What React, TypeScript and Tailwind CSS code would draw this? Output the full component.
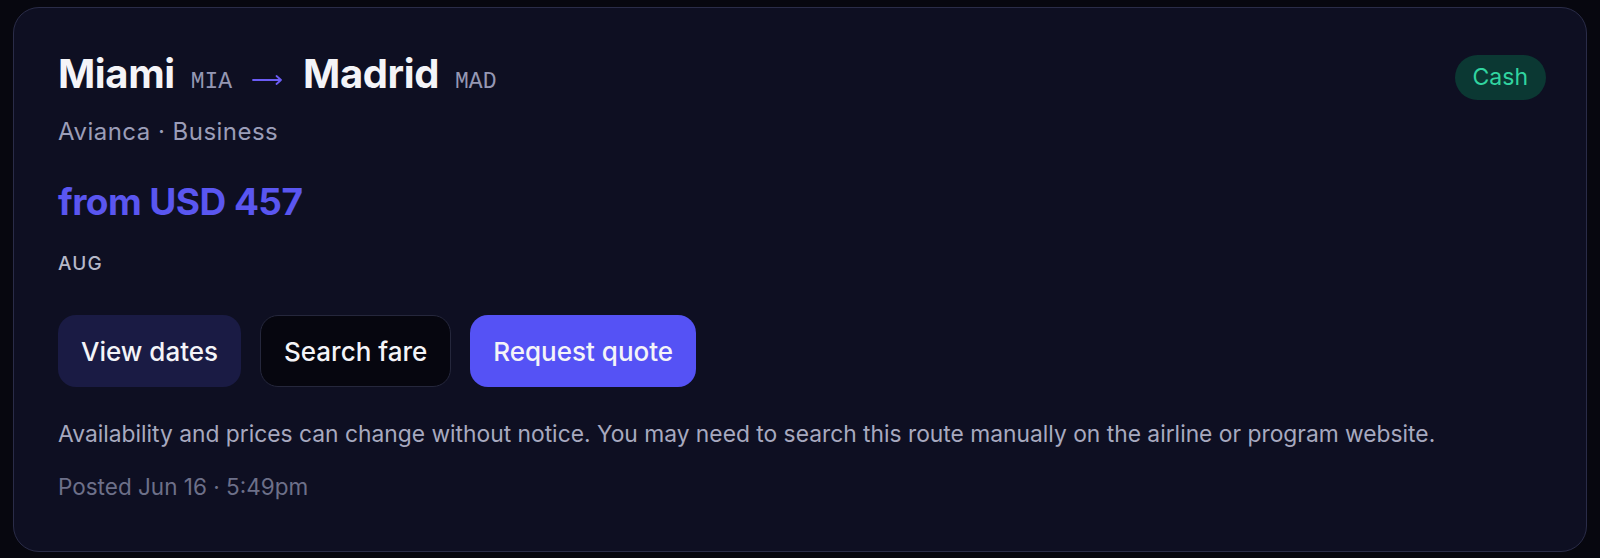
import React from "react";

const codeFont = { fontFamily: '"Liberation Mono", "DejaVu Sans Mono", monospace' };

function Code({ children }: { children: React.ReactNode }) {
  return (
    <span className="text-[23px] font-normal leading-none text-[#9597b3]" style={codeFont}>
      {children}
    </span>
  );
}

export default function App() {
  return (
    <div className="min-h-[558px] w-full bg-[#07070f] px-[13px] pt-[7px] font-['Inter',sans-serif]">
      <div className="rounded-[26px] border border-[#2a2c48] bg-[#0e0f22] pl-[44px] pr-[40px] pt-[44px] pb-[48px]">
        <div className="flex items-start justify-between">
          <div>
            <div className="flex h-[44px] items-baseline gap-[16px] leading-[44px]">
              <span className="text-[40px] font-bold tracking-[-0.01em] text-[#f4f4f8]">Miami</span>
              <Code>MIA</Code>
              <svg width="31" height="12" viewBox="0 0 31 12" className="mx-[4px] mt-[12px] self-center" fill="none">
                <path d="M1 6h28M24.5 2l4.5 4-4.5 4" stroke="#6b5cf5" strokeWidth="1.8" strokeLinecap="round" strokeLinejoin="round" />
              </svg>
              <span className="text-[40px] font-bold tracking-[-0.01em] text-[#f4f4f8]">Madrid</span>
              <Code>MAD</Code>
            </div>
            <div className="mt-[19px] text-[24px] leading-[33px] tracking-[0.02em] text-[#9b9db8]">Avianca · Business</div>
          </div>
          <span className="mt-[3px] rounded-full bg-[#0b3833] px-[18px] py-[8px] text-[23px] leading-[29px] text-[#31d4a0]">
            Cash
          </span>
        </div>

        <div className="mt-[30px] text-[37px] font-bold leading-[47px] tracking-[-0.015em] text-[#5a56f0]">from USD 457</div>
        <div className="mt-[25px] text-[19px] font-medium leading-[28px] tracking-[0.06em] text-[#b6b8c8]">AUG</div>

        <div className="mt-[37px] flex gap-[19px]">
          <button className="h-[72px] rounded-[18px] bg-[#1a1b44] px-[23px] text-[26px] font-medium text-[#f4f4f8]">
            View dates
          </button>
          <button className="h-[72px] rounded-[18px] border border-[#25273c] bg-[#06060f] px-[23px] text-[26px] font-medium text-[#f4f4f8]">
            Search fare
          </button>
          <button className="h-[72px] rounded-[18px] bg-[#5552f5] px-[23px] text-[26px] font-medium text-[#f4f4f8]">
            Request quote
          </button>
        </div>

        <p className="mt-[30px] text-[22.8px] leading-[33px] text-[#a7a9bf]">
          Availability and prices can change without notice. You may need to search this route manually on the airline or program website.
        </p>
        <p className="mt-[20px] text-[22.5px] leading-[33px] text-[#6d7089]">Posted Jun 16 · 5:49pm</p>
      </div>
    </div>
  );
}
